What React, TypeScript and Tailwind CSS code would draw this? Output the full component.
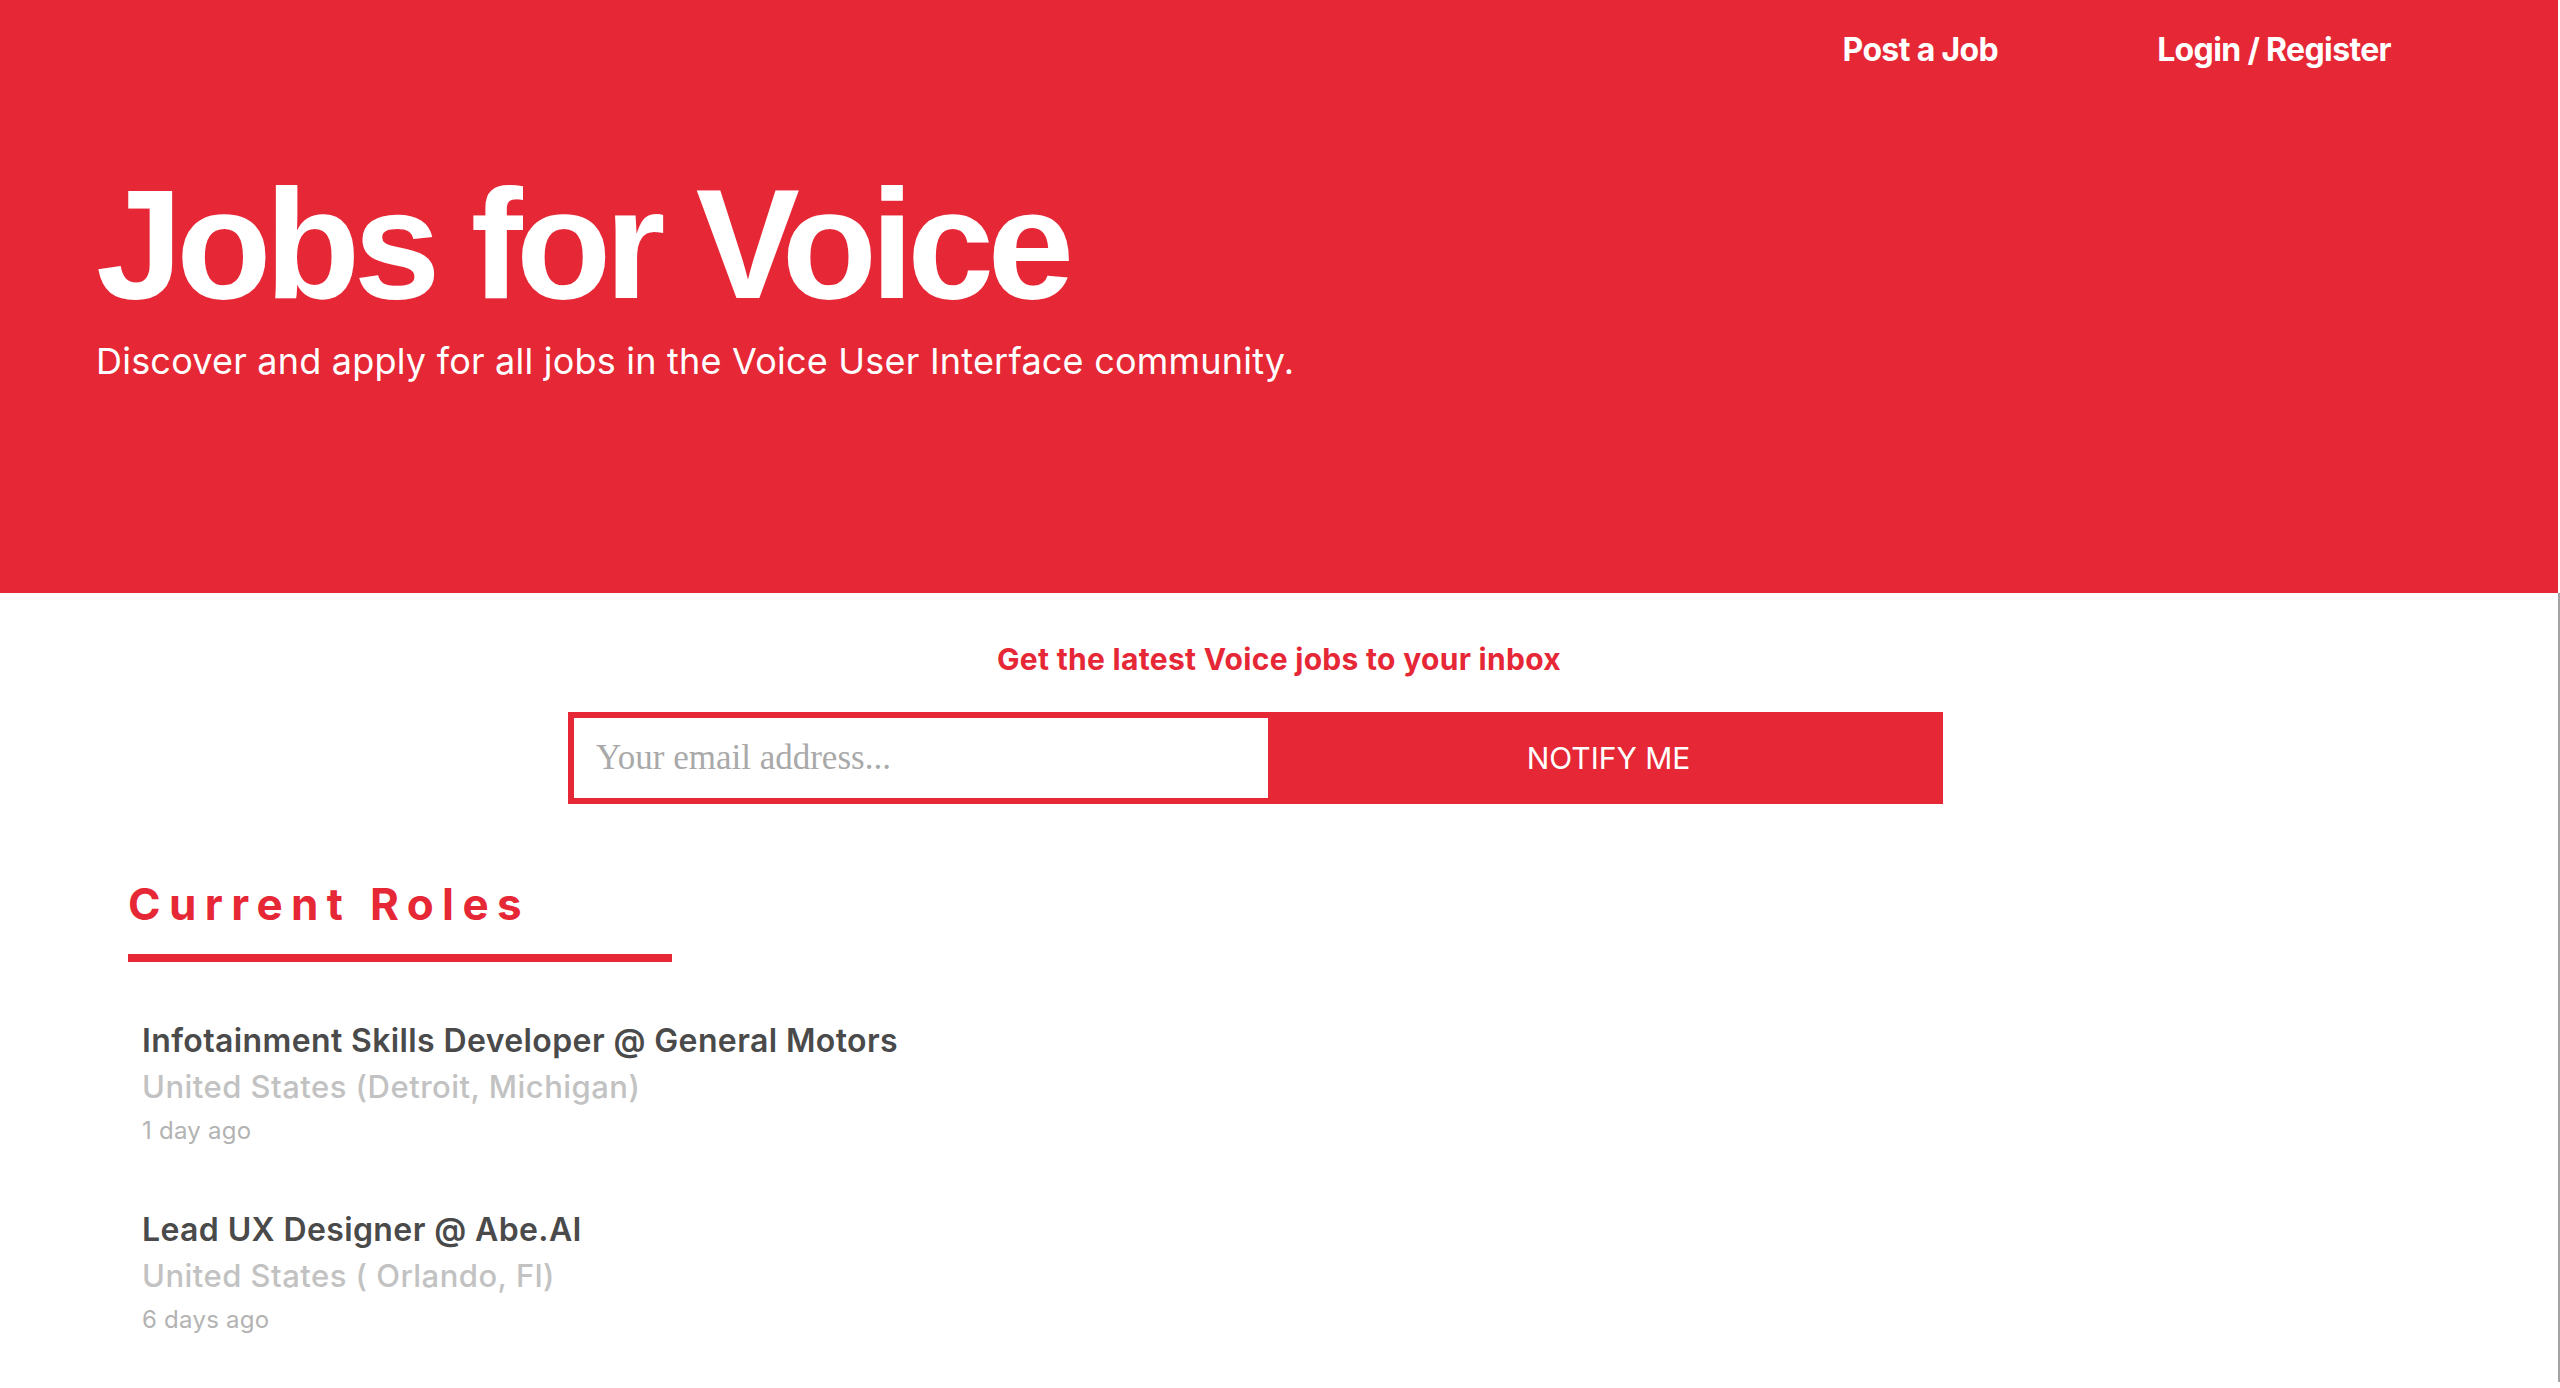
/*
 * Jobs for Voice - landing page
 */
const jobs = [
  {
    id: "gm",
    title: "Infotainment Skills Developer @ General Motors",
    location: "United States (Detroit, Michigan)",
    posted: "1 day ago",
  },
  {
    id: "abe",
    title: "Lead UX Designer @ Abe.AI",
    location: "United States ( Orlando, Fl)",
    posted: "6 days ago",
  },
];

export default function App() {
  return (
    <div className="min-h-screen bg-white font-['Inter','Noto_Sans',sans-serif]">
      {/* Hero */}
      <header className="w-[2558px] h-[593px] bg-[#e62736] text-white">
        <nav className="flex justify-end gap-[159px] pr-[167px] pt-[30px]">
          <a href="#" className="text-[32px] leading-[40px] font-bold tracking-[-0.02em]">
            Post a Job
          </a>
          <a href="#" className="text-[32px] leading-[40px] font-bold tracking-[-0.02em]">
            Login / Register
          </a>
        </nav>
        <div className="pl-[96px] mt-[96px]">
          <h1 className="text-[156px] leading-[156px] font-bold tracking-[-0.042em] font-['Liberation_Sans',Arial,sans-serif]">
            Jobs for Voice
          </h1>
          <p className="mt-[17px] text-[36px] leading-[44px] tracking-[0.006em]">
            Discover and apply for all jobs in the Voice User Interface community.
          </p>
        </div>
      </header>

      <main className="w-[2560px] border-r-2 border-[#a3a3a3] pb-[40px]">
        {/* Newsletter */}
        <section className="pt-[48px]">
          <h3 className="text-center text-[30px] leading-[36px] font-bold text-[#e62736] tracking-[0.01em]">
            Get the latest Voice jobs to your inbox
          </h3>
          <form className="ml-[568px] mt-[35px] flex w-[1375px] h-[92px] border-[6px] border-[#e62736] bg-[#e62736]">
            <input
              type="email"
              placeholder="Your email address..."
              className="w-[694px] h-full bg-white pl-[22px] text-[35px] font-['Liberation_Serif',serif] text-[#333] placeholder:text-[#a9a9a9] outline-none"
            />
            <button type="button" className="flex-1 h-full pl-[12px] text-white text-[30px] leading-none">
              NOTIFY ME
            </button>
          </form>
        </section>

        {/* Current Roles */}
        <section className="pl-[128px] mt-[74px]">
          <h2 className="text-[44px] leading-[52px] font-bold tracking-[0.19em] text-[#e62736]">
            Current Roles
          </h2>
          <div className="mt-[24px] w-[544px] h-[8px] bg-[#e62736]" />
        </section>

        <section className="pl-[142px] mt-[56px] flex flex-col gap-[54px]">
          {jobs.map((job) => (
            <div key={job.id}>
              <div className="text-[32px] leading-[46px] font-semibold text-[#4a4a4a] tracking-[0.012em]">
                {job.title}
              </div>
              <div className="text-[31px] leading-[45px] font-medium text-[#c2c2c2] tracking-[0.015em]">
                {job.location}
              </div>
              <div className="text-[24px] leading-[44px] text-[#b3b3b3] tracking-[0.01em]">
                {job.posted}
              </div>
            </div>
          ))}
        </section>
      </main>
    </div>
  );
}
